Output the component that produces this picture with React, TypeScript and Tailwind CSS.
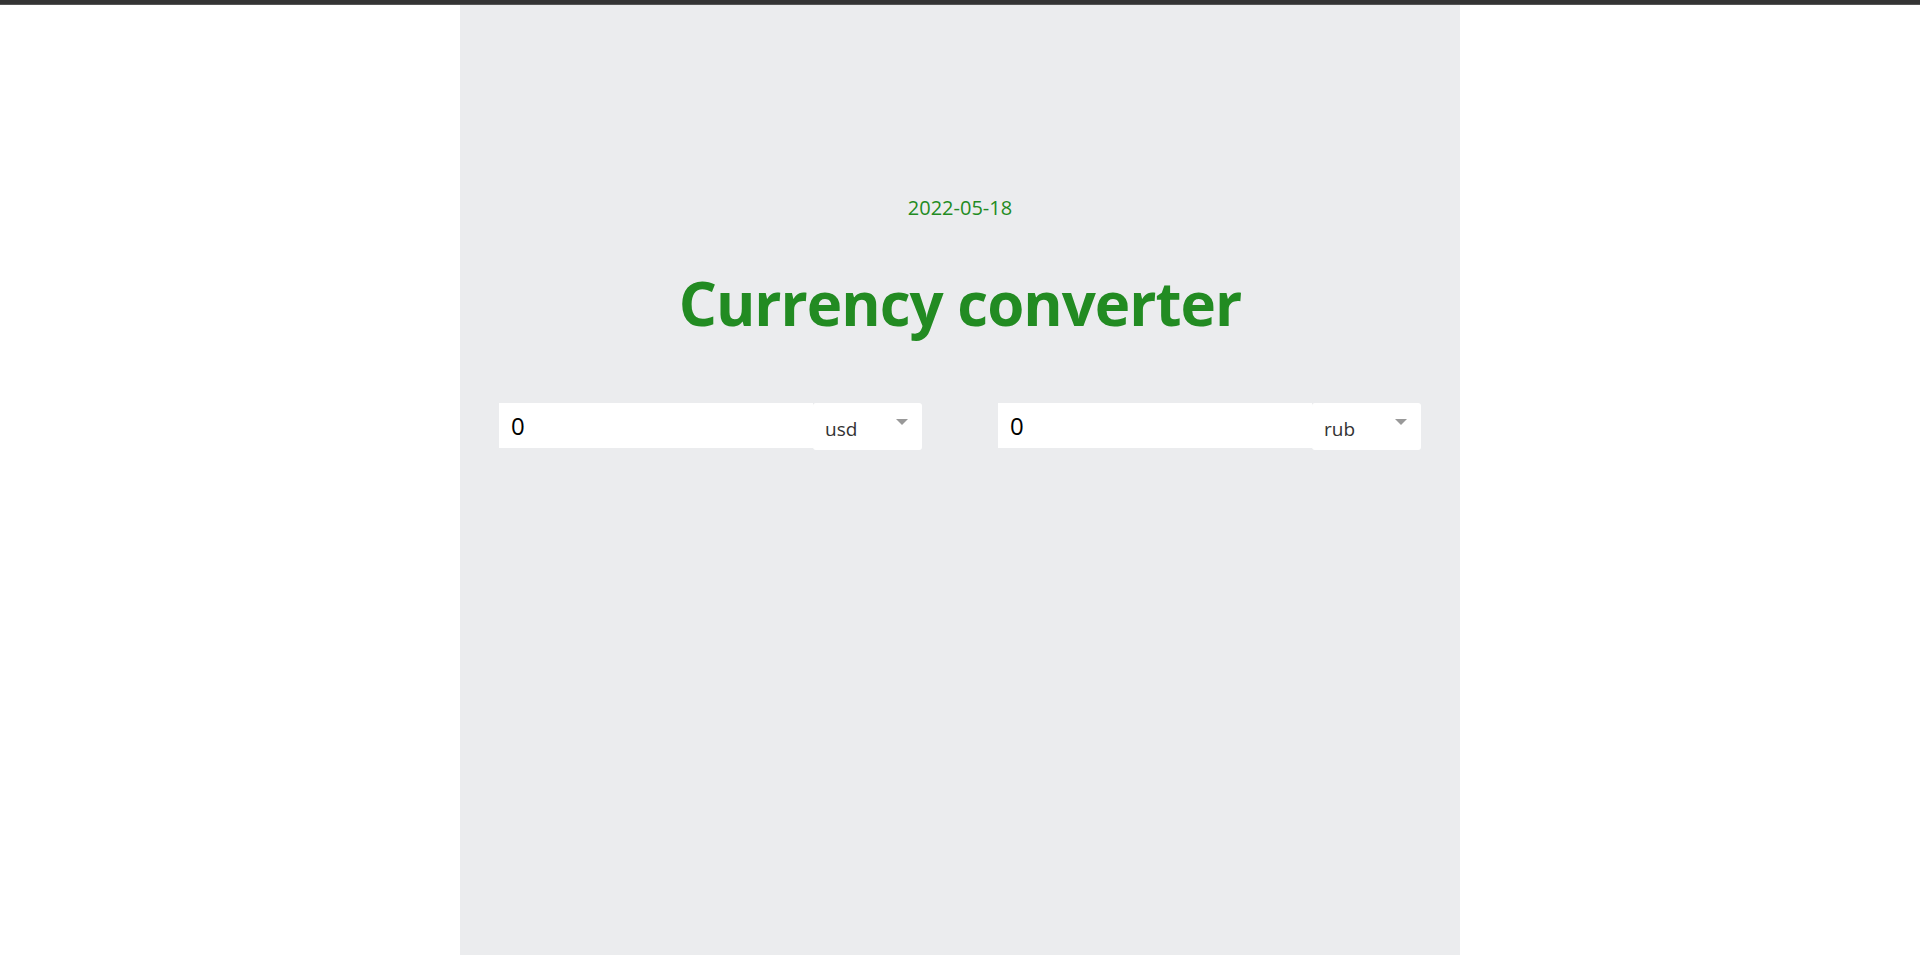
import React from "react";

function Pair({ cur }: { cur: string }) {
  return (
    <div className="flex items-start">
      <input
        readOnly
        value="0"
        className="w-[314px] h-[45px] bg-white pl-[12px] text-[24px] text-black outline-none"
        style={{ fontFamily: "'Open Sans', sans-serif" }}
      />
      <div className="relative w-[109px] h-[47px] bg-white rounded-[3px] flex items-center pl-[12px] pt-[5px]">
        <span className="text-[19px] text-[#333]">{cur}</span>
        <span className="absolute right-[14px] top-[16px] w-0 h-0 border-l-[6px] border-r-[6px] border-t-[6px] border-l-transparent border-r-transparent border-t-[#999]" />
      </div>
    </div>
  );
}

export default function App() {
  return (
    <div className="min-h-[955px] bg-white" style={{ fontFamily: "'Open Sans', 'Noto Sans', sans-serif" }}>
      <div className="h-[5px] bg-[#343434] border-b border-[#555]" />
      <div className="mx-auto w-[1000px] min-h-[950px] bg-[#ebecee] flex flex-col items-center pt-[188px]">
        <div className="text-[20px] leading-[30px] text-[#228b22]">2022-05-18</div>
        <h1 className="mt-[42px] text-[60px] leading-[77px] font-bold text-[#228b22] tracking-[-1px]">Currency converter</h1>
        <div className="mt-[61px] w-full px-[39px] flex justify-between">
          <Pair cur="usd" />
          <Pair cur="rub" />
        </div>
      </div>
    </div>
  );
}
